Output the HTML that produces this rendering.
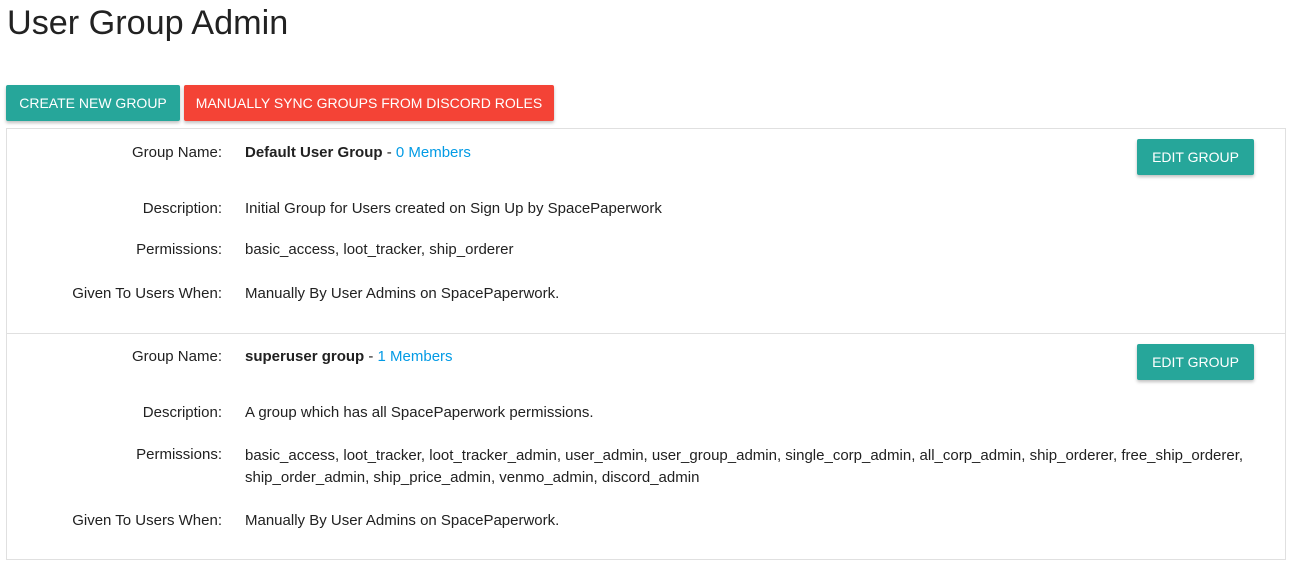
<!DOCTYPE html>
<html><head><style>
body{margin:0;background:#fff;font-family:"Liberation Sans",sans-serif;color:#212121;width:1302px;height:575px;position:relative;overflow:hidden}
.a{position:absolute;white-space:nowrap;font-size:15px;line-height:20px;margin-top:2px}
.l{text-align:right;right:1080px}
.v{left:245px}
h1{position:absolute;left:7px;top:1px;margin:0;font-weight:400;font-size:34.2px;line-height:44px;color:#222}
.btn{position:absolute;color:#fff;font-size:14px;text-align:center;line-height:36px;height:36px;border-radius:2px;box-shadow:0 2px 3px rgba(0,0,0,.25)}
.t{background:#26a69a}.r{background:#f44336}
.box{position:absolute;left:6px;width:1278px;border:1px solid #e0e0e0}
a{color:#039be5;text-decoration:none}
</style></head><body>
<h1>User Group Admin</h1>
<div class="btn t" style="left:6px;top:85px;width:174px">CREATE NEW GROUP</div>
<div class="btn r" style="left:184px;top:85px;width:370px">MANUALLY SYNC GROUPS FROM DISCORD ROLES</div>
<div class="box" style="top:128px;height:204px"></div>
<div class="box" style="top:333px;height:226px;border-top:none"></div>

<div class="a l" style="top:141px">Group Name:</div>
<div class="a v" style="top:141px"><b>Default User Group</b> - <a>0 Members</a></div>
<div class="btn t" style="left:1137px;top:139px;width:117px">EDIT GROUP</div>
<div class="a l" style="top:197px">Description:</div>
<div class="a v" style="top:197px">Initial Group for Users created on Sign Up by SpacePaperwork</div>
<div class="a l" style="top:238px">Permissions:</div>
<div class="a v" style="top:238px">basic_access, loot_tracker, ship_orderer</div>
<div class="a l" style="top:282px">Given To Users When:</div>
<div class="a v" style="top:282px">Manually By User Admins on SpacePaperwork.</div>

<div class="a l" style="top:345px">Group Name:</div>
<div class="a v" style="top:345px"><b>superuser group</b> - <a>1 Members</a></div>
<div class="btn t" style="left:1137px;top:344px;width:117px">EDIT GROUP</div>
<div class="a l" style="top:401px">Description:</div>
<div class="a v" style="top:401px">A group which has all SpacePaperwork permissions.</div>
<div class="a l" style="top:443px">Permissions:</div>
<div class="a v" style="top:443px;line-height:22px">basic_access, loot_tracker, loot_tracker_admin, user_admin, user_group_admin, single_corp_admin, all_corp_admin, ship_orderer, free_ship_orderer,<br>ship_order_admin, ship_price_admin, venmo_admin, discord_admin</div>
<div class="a l" style="top:509px">Given To Users When:</div>
<div class="a v" style="top:509px">Manually By User Admins on SpacePaperwork.</div>
</body></html>
